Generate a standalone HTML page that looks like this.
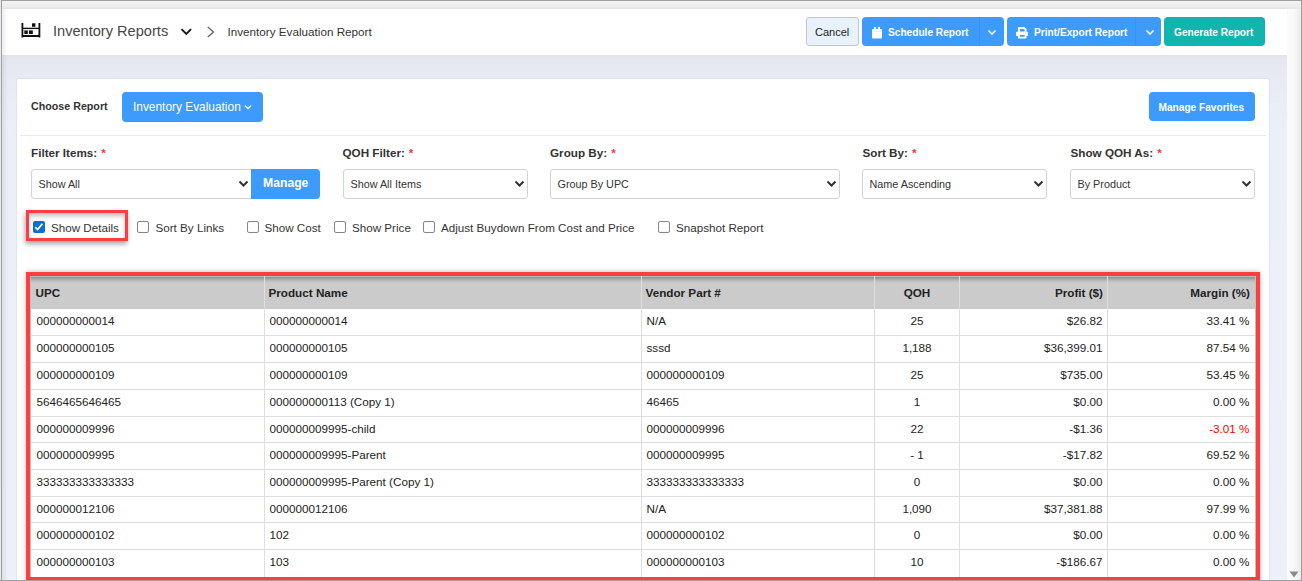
<!DOCTYPE html>
<html><head><meta charset="utf-8">
<style>
*{box-sizing:border-box;margin:0;padding:0}
html,body{width:1302px;height:581px;overflow:hidden;background:#fff}
body{position:relative;font-family:"Liberation Sans",sans-serif;color:#333}
.a{position:absolute}
.t{position:absolute;white-space:nowrap;line-height:1}
/* frame */
#frame-top{left:0;top:0;width:1302px;height:9px;background:linear-gradient(#a0a0a0 0,#a0a0a0 1px,#f4f4f4 1px,#e9e9e9 8px)}
#frame-left{left:1px;top:0;width:1px;height:581px;background:#a0a0a0}
#frame-right{left:1301px;top:0;width:1px;height:581px;background:#a0a0a0}
#frame-bottom{left:0;top:580px;width:1302px;height:1px;background:#a0a0a0}
#hdr{left:2px;top:9px;width:1285px;height:46px;background:#fff}
#hdrline{left:2px;top:8px;width:1285px;height:1px;background:#dfe4ea}
#bg{left:2px;top:55px;width:1285px;height:525px;background:linear-gradient(#dfe2ea 0,#e4e7ef 2px,#e8ebf4 22px,#ebeff8 70px,#ecf0f8 525px)}
#sb{left:1287px;top:9px;width:14px;height:571px;background:#fafafa}
#card{left:17px;top:79px;width:1252px;height:501px;background:#fff;border-radius:1px 1px 0 0;box-shadow:0 0 1.5px rgba(0,0,40,.22)}
.btn{position:absolute;border-radius:4px;color:#fff;font-weight:bold;font-size:10.15px;line-height:1}
.blue{background:#3d9bfd}
.lbl{position:absolute;font-weight:bold;font-size:11.7px;color:#333;white-space:nowrap;line-height:1}
.lbl b{color:#e8394a;font-weight:bold;margin-left:4px}
.sel{position:absolute;top:169px;height:30px;border:1px solid #d3d3d3;border-radius:3px;background:#fff}
.sel span{position:absolute;left:6.5px;top:9px;font-size:10.8px;color:#333;white-space:nowrap;line-height:1}
.sel svg{position:absolute;top:9.8px}
.cb{position:absolute;top:221px;width:12px;height:12px;border:1px solid #858585;border-radius:2px;background:#fff}
.cbl{position:absolute;top:221.5px;font-size:11.65px;color:#333;white-space:nowrap;line-height:1}
/* table */
#tbl{position:absolute;left:30px;top:276px;width:1226px;height:301px;background:#fff;border:1px solid #c4c4c4;border-bottom:none}
#thd{position:absolute;left:0;top:0;width:1224px;height:33px;background:#cbcbcb}
.th{position:absolute;top:12px;font-weight:bold;font-size:11.7px;color:#222;white-space:nowrap;line-height:1}
.td{position:absolute;font-size:11.7px;color:#222;white-space:nowrap;line-height:1}
.vl{position:absolute;top:0;width:1px;height:301px;background:#dcdcdc}
.hl{position:absolute;left:0;width:1224px;height:1px;background:#dcdcdc}
#red{position:absolute;left:26px;top:272px;width:1234px;height:309px;border:4px solid #fe3d3f;box-shadow:0 0 5px rgba(0,0,0,.28)}
#red2{position:absolute;left:26px;top:210px;width:102px;height:31px;border:3px solid #fc3d42;box-shadow:-1px 3px 5px rgba(0,0,0,.35), inset 0 3px 4px rgba(0,0,0,.25)}
</style></head><body>
<div id="frame-top" class="a"></div>
<div id="hdrline" class="a"></div>
<div id="hdr" class="a"></div>
<div id="bg" class="a"></div>
<div id="sb" class="a"></div>
<div id="card" class="a"></div>

<!-- header -->
<svg class="a" style="left:20px;top:21px" width="22" height="18" viewBox="0 0 22 18">
  <rect x="1.5" y="2" width="1.8" height="14.5" fill="#111"/>
  <rect x="18.5" y="2" width="1.8" height="14.5" fill="#111"/>
  <rect x="2" y="6.7" width="17" height="1.4" fill="#111"/>
  <rect x="2" y="14" width="17" height="2" fill="#111"/>
  <rect x="12" y="2.3" width="3.4" height="3.5" fill="#111"/>
  <rect x="4.3" y="9.4" width="3.5" height="3.6" fill="#111"/>
  <rect x="8.9" y="9.4" width="3.9" height="3.6" fill="#111"/>
</svg>
<div class="t" style="left:53px;top:23.5px;font-size:14.6px;color:#474747">Inventory Reports</div>
<svg class="a" style="left:180px;top:28px" width="13" height="8" viewBox="0 0 13 8"><path d="M1.5 1.2 L6.3 5.9 L11.1 1.2" fill="none" stroke="#111" stroke-width="1.8"/></svg>
<svg class="a" style="left:206px;top:26px" width="10" height="12" viewBox="0 0 10 12"><path d="M1.8 1 L7.5 6 L1.8 11" fill="none" stroke="#6d6d7e" stroke-width="1.5"/></svg>
<div class="t" style="left:227.5px;top:25.5px;font-size:11.7px;color:#333">Inventory Evaluation Report</div>

<div class="a" style="left:806px;top:17px;width:53px;height:29px;background:#e8f2fc;border:1px solid #c6c6c6;border-radius:3px"></div>
<div class="t" style="left:815px;top:27px;font-size:11px;color:#222">Cancel</div>

<div class="btn blue" style="left:862px;top:17px;width:142px;height:29px"></div>
<div class="a" style="left:979px;top:17px;width:1px;height:29px;background:#3794f6"></div>
<svg class="a" style="left:866px;top:24px" width="20" height="18" viewBox="0 0 20 18"><rect x="6" y="5" width="10" height="9.5" rx="1" fill="#fff"/><rect x="8" y="3" width="2" height="3" fill="#fff"/><rect x="12" y="3" width="2" height="3" fill="#fff"/><rect x="6" y="7.1" width="10" height="0.6" fill="#cfe4fd"/></svg>
<div class="t btn" style="left:888px;top:28px;position:absolute">Schedule Report</div>
<svg class="a" style="left:987px;top:29px" width="10" height="7" viewBox="0 0 10 7"><path d="M1.5 1.5 L5 5 L8.5 1.5" fill="none" stroke="#fff" stroke-width="1.6"/></svg>

<div class="btn blue" style="left:1007px;top:17px;width:154px;height:29px"></div>
<div class="a" style="left:1135px;top:17px;width:1px;height:29px;background:#3794f6"></div>
<svg class="a" style="left:1012px;top:24px" width="20" height="18" viewBox="0 0 20 18"><path d="M5.9 8 V3.9 Q5.9 2.9 6.9 2.9 H12.4 L14.5 5 V8 Z" fill="#fff"/><rect x="4" y="7.7" width="12" height="4.4" rx="1.2" fill="#fff"/><rect x="5.9" y="10" width="8.6" height="4.5" rx="0.8" fill="#fff"/><path d="M7.9 5.1 H11.6 L12.7 6.3 V7.6 H7.9 Z" fill="#3d9bfd"/><rect x="7.9" y="11" width="4.8" height="1.7" fill="#3d9bfd"/><circle cx="13.6" cy="9.3" r="0.55" fill="#9ccaff"/></svg>
<div class="t btn" style="left:1034px;top:28px;position:absolute">Print/Export Report</div>
<svg class="a" style="left:1145px;top:29px" width="10" height="7" viewBox="0 0 10 7"><path d="M1.5 1.5 L5 5 L8.5 1.5" fill="none" stroke="#fff" stroke-width="1.6"/></svg>

<div class="btn" style="left:1164px;top:17px;width:101px;height:29px;background:#10b5ad"></div>
<div class="t btn" style="left:1174px;top:28px;position:absolute">Generate Report</div>

<!-- choose report row -->
<div class="lbl" style="left:31px;top:100.5px;font-size:10.7px">Choose Report</div>
<div class="btn blue" style="left:122px;top:92px;width:141px;height:30px"></div>
<div class="t" style="left:133px;top:101.5px;font-size:11.9px;color:#fff">Inventory Evaluation</div>
<svg class="a" style="left:243px;top:104px" width="10" height="7" viewBox="0 0 10 7"><path d="M1.8 1.5 L5 4.5 L8.2 1.5" fill="none" stroke="#fff" stroke-width="1.3"/></svg>
<div class="btn blue" style="left:1149px;top:92px;width:106px;height:29px"></div>
<div class="t btn" style="left:1158.5px;top:102.5px;position:absolute">Manage Favorites</div>
<div class="a" style="left:20px;top:135px;width:1246px;height:1px;background:#e8eae8"></div>

<!-- filters -->
<div class="lbl" style="left:31px;top:147px">Filter Items:<b>*</b></div>
<div class="lbl" style="left:342.5px;top:147px">QOH Filter:<b>*</b></div>
<div class="lbl" style="left:550px;top:147px">Group By:<b>*</b></div>
<div class="lbl" style="left:862.5px;top:147px">Sort By:<b>*</b></div>
<div class="lbl" style="left:1070.5px;top:147px">Show QOH As:<b>*</b></div>

<div class="sel" style="left:31px;width:221px;border-radius:3px 0 0 3px"><span>Show All</span><svg style="left:206px" width="11" height="8" viewBox="0 0 11 8"><path d="M1.5 1.5 L5.5 5.5 L9.5 1.5" fill="none" stroke="#333" stroke-width="2"/></svg></div>
<div class="btn blue" style="left:251px;top:169px;width:69px;height:30px;border-radius:0 4px 4px 0"></div>
<div class="t" style="left:263px;top:177px;font-size:12.2px;font-weight:bold;color:#fff">Manage</div>
<div class="sel" style="left:343px;width:185px"><span>Show All Items</span><svg style="left:170px" width="11" height="8" viewBox="0 0 11 8"><path d="M1.5 1.5 L5.5 5.5 L9.5 1.5" fill="none" stroke="#333" stroke-width="2"/></svg></div>
<div class="sel" style="left:550px;width:290px"><span>Group By UPC</span><svg style="left:275px" width="11" height="8" viewBox="0 0 11 8"><path d="M1.5 1.5 L5.5 5.5 L9.5 1.5" fill="none" stroke="#333" stroke-width="2"/></svg></div>
<div class="sel" style="left:862px;width:185px"><span>Name Ascending</span><svg style="left:170px" width="11" height="8" viewBox="0 0 11 8"><path d="M1.5 1.5 L5.5 5.5 L9.5 1.5" fill="none" stroke="#333" stroke-width="2"/></svg></div>
<div class="sel" style="left:1070px;width:185px"><span>By Product</span><svg style="left:170px" width="11" height="8" viewBox="0 0 11 8"><path d="M1.5 1.5 L5.5 5.5 L9.5 1.5" fill="none" stroke="#333" stroke-width="2"/></svg></div>

<!-- checkboxes -->
<div id="red2"></div>
<div class="a" style="left:33px;top:221px;width:12px;height:12px;background:#0b6fd1;border-radius:2px"></div>
<svg class="a" style="left:33px;top:221px" width="12" height="12" viewBox="0 0 12 12"><path d="M2.3 6.2 L4.6 8.5 L9.4 2.7" fill="none" stroke="#fff" stroke-width="1.7"/></svg>
<div class="cbl" style="left:51px">Show Details</div>
<div class="cb" style="left:137px"></div><div class="cbl" style="left:155.5px">Sort By Links</div>
<div class="cb" style="left:247px"></div><div class="cbl" style="left:264.5px">Show Cost</div>
<div class="cb" style="left:334px"></div><div class="cbl" style="left:352px">Show Price</div>
<div class="cb" style="left:423px"></div><div class="cbl" style="left:441px">Adjust Buydown From Cost and Price</div>
<div class="cb" style="left:658px"></div><div class="cbl" style="left:676px">Snapshot Report</div>

<!-- table -->
<div id="red"></div>
<!--TBL-->
<div class="a" style="left:30px;top:276px;width:1226px;height:301px;background:#fff"></div>
<div class="a" style="left:30px;top:276px;width:1226px;height:33px;background:#cbcbcb"></div>
<div class="a" style="left:30px;top:276px;width:1226px;height:7px;background:linear-gradient(#b3bdbd 0,#b3bdbd 1px,#8e8e8e 1px,#a6a6a6 3px,#bdbdbd 5px,#cbcbcb 7px)"></div>
<div class="a" style="left:30px;top:276px;width:1px;height:301px;background:#c0c0c0"></div>
<div class="a" style="left:1255px;top:276px;width:1px;height:301px;background:#c0c0c0"></div>
<div class="a" style="left:264px;top:276px;width:1px;height:301px;background:#dedede"></div>
<div class="a" style="left:641px;top:276px;width:1px;height:301px;background:#dedede"></div>
<div class="a" style="left:874px;top:276px;width:1px;height:301px;background:#dedede"></div>
<div class="a" style="left:959px;top:276px;width:1px;height:301px;background:#dedede"></div>
<div class="a" style="left:1107px;top:276px;width:1px;height:301px;background:#dedede"></div>
<div class="a" style="left:31px;top:335px;width:1224px;height:1px;background:#dedede"></div>
<div class="a" style="left:31px;top:362px;width:1224px;height:1px;background:#dedede"></div>
<div class="a" style="left:31px;top:389px;width:1224px;height:1px;background:#dedede"></div>
<div class="a" style="left:31px;top:416px;width:1224px;height:1px;background:#dedede"></div>
<div class="a" style="left:31px;top:442px;width:1224px;height:1px;background:#dedede"></div>
<div class="a" style="left:31px;top:469px;width:1224px;height:1px;background:#dedede"></div>
<div class="a" style="left:31px;top:496px;width:1224px;height:1px;background:#dedede"></div>
<div class="a" style="left:31px;top:522px;width:1224px;height:1px;background:#dedede"></div>
<div class="a" style="left:31px;top:549px;width:1224px;height:1px;background:#dedede"></div>
<div class="th" style="left:35.5px;top:286.5px">UPC</div>
<div class="th" style="left:268.5px;top:286.5px">Product Name</div>
<div class="th" style="left:645.5px;top:286.5px">Vendor Part #</div>
<div class="th" style="left:875px;width:84px;text-align:center;top:286.5px">QOH</div>
<div class="th" style="left:959px;width:144px;text-align:right;top:286.5px">Profit ($)</div>
<div class="th" style="left:1107px;width:143px;text-align:right;top:286.5px">Margin (%)</div>
<div class="td" style="left:36.5px;top:315px">000000000014</div>
<div class="td" style="left:269.5px;top:315px">000000000014</div>
<div class="td" style="left:646.5px;top:315px">N/A</div>
<div class="td" style="left:875px;width:84px;text-align:center;top:315px">25</div>
<div class="td" style="left:959px;width:143.5px;text-align:right;top:315px">$26.82</div>
<div class="td" style="left:1107px;width:142.5px;text-align:right;top:315px">33.41 %</div>
<div class="td" style="left:36.5px;top:342px">000000000105</div>
<div class="td" style="left:269.5px;top:342px">000000000105</div>
<div class="td" style="left:646.5px;top:342px">sssd</div>
<div class="td" style="left:875px;width:84px;text-align:center;top:342px">1,188</div>
<div class="td" style="left:959px;width:143.5px;text-align:right;top:342px">$36,399.01</div>
<div class="td" style="left:1107px;width:142.5px;text-align:right;top:342px">87.54 %</div>
<div class="td" style="left:36.5px;top:369px">000000000109</div>
<div class="td" style="left:269.5px;top:369px">000000000109</div>
<div class="td" style="left:646.5px;top:369px">000000000109</div>
<div class="td" style="left:875px;width:84px;text-align:center;top:369px">25</div>
<div class="td" style="left:959px;width:143.5px;text-align:right;top:369px">$735.00</div>
<div class="td" style="left:1107px;width:142.5px;text-align:right;top:369px">53.45 %</div>
<div class="td" style="left:36.5px;top:396px">5646465646465</div>
<div class="td" style="left:269.5px;top:396px">000000000113 (Copy 1)</div>
<div class="td" style="left:646.5px;top:396px">46465</div>
<div class="td" style="left:875px;width:84px;text-align:center;top:396px">1</div>
<div class="td" style="left:959px;width:143.5px;text-align:right;top:396px">$0.00</div>
<div class="td" style="left:1107px;width:142.5px;text-align:right;top:396px">0.00 %</div>
<div class="td" style="left:36.5px;top:423px">000000009996</div>
<div class="td" style="left:269.5px;top:423px">000000009995-child</div>
<div class="td" style="left:646.5px;top:423px">000000009996</div>
<div class="td" style="left:875px;width:84px;text-align:center;top:423px">22</div>
<div class="td" style="left:959px;width:143.5px;text-align:right;top:423px">-$1.36</div>
<div class="td" style="left:1107px;width:142.5px;text-align:right;top:423px;color:#f00">-3.01 %</div>
<div class="td" style="left:36.5px;top:449px">000000009995</div>
<div class="td" style="left:269.5px;top:449px">000000009995-Parent</div>
<div class="td" style="left:646.5px;top:449px">000000009995</div>
<div class="td" style="left:875px;width:84px;text-align:center;top:449px">- 1</div>
<div class="td" style="left:959px;width:143.5px;text-align:right;top:449px">-$17.82</div>
<div class="td" style="left:1107px;width:142.5px;text-align:right;top:449px">69.52 %</div>
<div class="td" style="left:36.5px;top:476px">333333333333333</div>
<div class="td" style="left:269.5px;top:476px">000000009995-Parent (Copy 1)</div>
<div class="td" style="left:646.5px;top:476px">333333333333333</div>
<div class="td" style="left:875px;width:84px;text-align:center;top:476px">0</div>
<div class="td" style="left:959px;width:143.5px;text-align:right;top:476px">$0.00</div>
<div class="td" style="left:1107px;width:142.5px;text-align:right;top:476px">0.00 %</div>
<div class="td" style="left:36.5px;top:503px">000000012106</div>
<div class="td" style="left:269.5px;top:503px">000000012106</div>
<div class="td" style="left:646.5px;top:503px">N/A</div>
<div class="td" style="left:875px;width:84px;text-align:center;top:503px">1,090</div>
<div class="td" style="left:959px;width:143.5px;text-align:right;top:503px">$37,381.88</div>
<div class="td" style="left:1107px;width:142.5px;text-align:right;top:503px">97.99 %</div>
<div class="td" style="left:36.5px;top:529px">000000000102</div>
<div class="td" style="left:269.5px;top:529px">102</div>
<div class="td" style="left:646.5px;top:529px">000000000102</div>
<div class="td" style="left:875px;width:84px;text-align:center;top:529px">0</div>
<div class="td" style="left:959px;width:143.5px;text-align:right;top:529px">$0.00</div>
<div class="td" style="left:1107px;width:142.5px;text-align:right;top:529px">0.00 %</div>
<div class="td" style="left:36.5px;top:556px">000000000103</div>
<div class="td" style="left:269.5px;top:556px">103</div>
<div class="td" style="left:646.5px;top:556px">000000000103</div>
<div class="td" style="left:875px;width:84px;text-align:center;top:556px">10</div>
<div class="td" style="left:959px;width:143.5px;text-align:right;top:556px">-$186.67</div>
<div class="td" style="left:1107px;width:142.5px;text-align:right;top:556px">0.00 %</div>
<!--/TBL-->

<div class="a" style="left:2px;top:9px;width:6px;height:571px;background:linear-gradient(90deg,rgba(0,10,30,.07),rgba(0,10,30,0))"></div>
<div class="a" style="left:1293px;top:9px;width:8px;height:571px;background:linear-gradient(90deg,rgba(0,0,0,0),rgba(0,0,0,.06))"></div>
<div class="a" style="left:0;top:0;width:1px;height:581px;background:#e6e8ee"></div><div id="frame-left" class="a"></div>
<div id="frame-right" class="a"></div>
<div id="frame-bottom" class="a"></div>
<svg class="a" style="left:1289px;top:571px" width="10" height="7" viewBox="0 0 10 7"><path d="M0.5 0.5 H9.5 L5 6.5 Z" fill="#8a8a8a"/></svg>
</body></html>
